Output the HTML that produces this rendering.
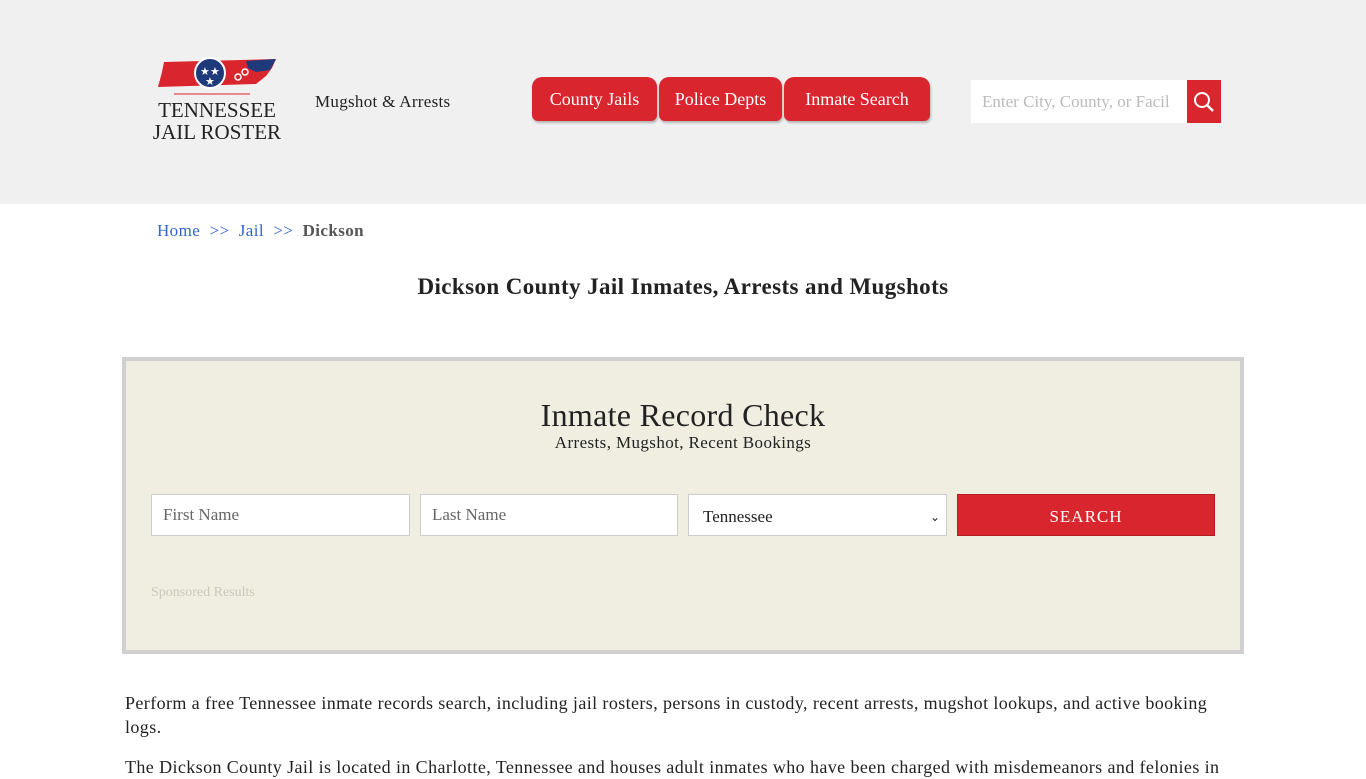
<!DOCTYPE html>
<html><head><meta charset="utf-8"><style>
body{margin:0;background:#fff;font-family:"Liberation Serif",serif;color:#222;width:1366px;height:768px;overflow:hidden;position:relative}
.hdr{position:absolute;left:0;top:0;width:1366px;height:204px;background:#f0f0f0}
.tag{position:absolute;left:315px;top:92px;font-size:17px;color:#222;letter-spacing:0.3px}
.tab{position:absolute;top:77px;height:44px;background:#d9262e;color:#fff;font-size:18px;line-height:44px;text-align:center;border-radius:10px 10px 6px 6px;box-shadow:1px 2px 2px rgba(0,0,0,.25)}
.srch{position:absolute;left:971px;top:80px;width:216px;height:43px;background:#fff;color:#bbb;font-size:17px;line-height:43px;padding-left:11px;box-sizing:border-box;white-space:nowrap;overflow:hidden}
.sbtn{position:absolute;left:1187px;top:80px;width:34px;height:43px;background:#d9262e}
.bc{position:absolute;left:157px;top:221px;font-size:17px;letter-spacing:0.4px}
.bc a{color:#3366cc;text-decoration:none}
h1{position:absolute;left:0;width:1366px;top:274px;margin:0;text-align:center;font-size:23px;font-weight:bold;color:#222;letter-spacing:0.4px}
.box{position:absolute;left:122px;top:357px;width:1122px;height:297px;box-sizing:border-box;border:4px solid #d0d0d0;background:#f0eee0}
.box h2{position:absolute;left:0;width:100%;top:36px;margin:0;text-align:center;font-weight:normal;font-size:32px;letter-spacing:0.3px}
.sub{position:absolute;left:0;width:100%;top:72px;text-align:center;font-size:17px;letter-spacing:0.4px}
.in{position:absolute;top:133px;height:42px;background:#fff;border:1px solid #ccc;box-sizing:border-box;font-size:17px;color:#666;line-height:40px;padding-left:11px}
.btn{position:absolute;left:831px;top:133px;width:258px;height:42px;background:#d9262e;color:#fff;text-align:center;line-height:44px;font-size:17px;letter-spacing:1px;border:1px solid #b51d24;box-sizing:border-box}
.sp{position:absolute;left:25px;top:224px;font-size:14px;color:#c8c8c0}
p{position:absolute;left:125px;margin:0;font-size:18px;line-height:24px;width:1110px;letter-spacing:0.4px}
</style></head><body>
<div class="hdr">
<svg style="position:absolute;left:154px;top:56px" width="126" height="44" viewBox="0 0 126 44">
<path d="M10 6 L122 3 L118 12 L112 20 L102 28 L4 31 L8 16 Z" fill="#d9262e"/>
<path d="M92 5 L122 3 L116 14 L102 16 L94 12 Z" fill="#1f3a7a"/>
<circle cx="56" cy="17" r="15" fill="#1f3a7a" stroke="#fff" stroke-width="2"/>
<text x="46" y="19" fill="#fff" font-size="11">★</text><text x="56" y="19" fill="#fff" font-size="11">★</text><text x="51" y="29" fill="#fff" font-size="11">★</text>
<circle cx="84" cy="21" r="3" fill="none" stroke="#fff" stroke-width="1.5"/><circle cx="91" cy="16" r="3" fill="none" stroke="#fff" stroke-width="1.5"/>
<line x1="20" y1="38" x2="96" y2="38" stroke="#d9262e" stroke-width="1"/>
</svg>
<div style="position:absolute;left:144px;top:99px;width:146px;text-align:center;font-family:'Liberation Serif',serif;font-size:21px;line-height:22px;color:#222;white-space:nowrap">TENNESSEE<br>JAIL ROSTER</div>
<div class="tag">Mugshot &amp; Arrests</div>
<div class="tab" style="left:532px;width:125px">County Jails</div>
<div class="tab" style="left:659px;width:123px">Police Depts</div>
<div class="tab" style="left:784px;width:146px">Inmate Search</div>
<div class="srch">Enter City, County, or Facil</div>
<div class="sbtn"><svg width="34" height="43"><circle cx="15" cy="20" r="7" fill="none" stroke="#fff" stroke-width="2"/><line x1="20" y1="25" x2="26" y2="31" stroke="#fff" stroke-width="2.5"/></svg></div>
</div>
<div class="bc"><a>Home</a> &nbsp;<a>&gt;&gt;</a>&nbsp; <a>Jail</a> &nbsp;<a>&gt;&gt;</a>&nbsp; <b style="color:#555">Dickson</b></div>
<h1>Dickson County Jail Inmates, Arrests and Mugshots</h1>
<div class="box">
<h2>Inmate Record Check</h2>
<div class="sub">Arrests, Mugshot, Recent Bookings</div>
<div class="in" style="left:25px;width:259px">First Name</div>
<div class="in" style="left:294px;width:258px">Last Name</div>
<div class="in" style="left:562px;width:259px;color:#222;line-height:44px;padding-left:14px">Tennessee<span style="position:absolute;right:6px;font-size:12px">&#8964;</span></div>
<div class="btn">SEARCH</div>
<div class="sp">Sponsored Results</div>
</div>
<p style="top:691px">Perform a free Tennessee inmate records search, including jail rosters, persons in custody, recent arrests, mugshot lookups, and active booking logs.</p>
<p style="top:755px;white-space:nowrap">The Dickson County Jail is located in Charlotte, Tennessee and houses adult inmates who have been charged with misdemeanors and felonies in</p>
</body></html>
